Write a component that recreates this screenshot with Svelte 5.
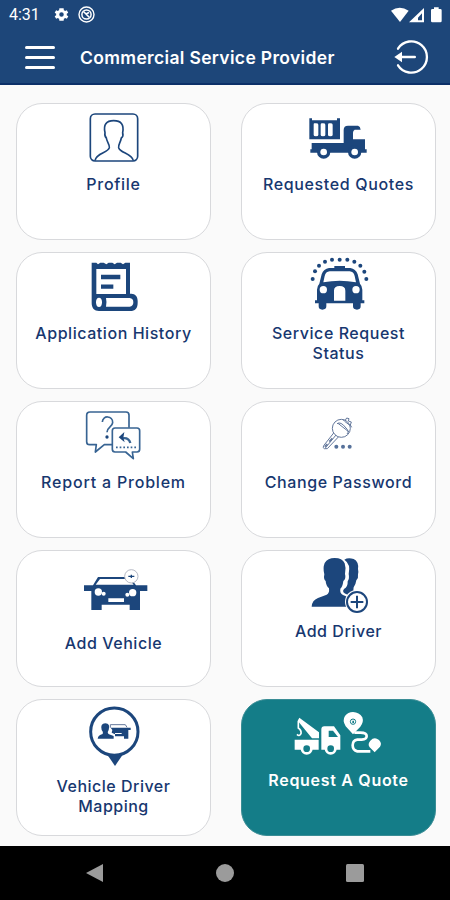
<script lang="ts">
    type Tile = {
        icon: string;
        lines: string[];
        top: number;
        height: number;
        spacing: number;
        accent?: boolean;
    };

    // top is where each drawing starts in its own units (3 per pixel)
    const tiles: Tile[] = [
        { icon: "profile", lines: ["Profile"], top: 24, height: 72, spacing: 0.7 },
        { icon: "truck", lines: ["Requested Quotes"], top: 24, height: 72, spacing: 0.65 },
        { icon: "history", lines: ["Application History"], top: 6, height: 72, spacing: 0.55 },
        { icon: "taxi", lines: ["Service Request", "Status"], top: 6, height: 72, spacing: 0.55 },
        { icon: "report", lines: ["Report a Problem"], top: 5, height: 72, spacing: 0.8 },
        { icon: "key", lines: ["Change Password"], top: 5, height: 72, spacing: 0.6 },
        { icon: "vehicle", lines: ["Add Vehicle"], top: 15, height: 84, spacing: 0.55 },
        { icon: "driver", lines: ["Add Driver"], top: 15, height: 72, spacing: 0.55 },
        { icon: "mapping", lines: ["Vehicle Driver", "Mapping"], top: 12, height: 78, spacing: 0.5 },
        { icon: "quote", lines: ["Request A Quote"], top: 12, height: 72, spacing: 0.7, accent: true },
    ];
</script>

<div class="screen">
    <div class="status">
        <span class="time">4:31</span>
        <svg class="gear" viewBox="0 0 24 24" width="17" height="17">
            <path
                fill="#fff"
                fill-rule="evenodd"
                d="M19.4 13a7 7 0 0 0 0-2l2.1-1.6-2-3.5-2.5 1a8 8 0 0 0-1.7-1L15 3.2h-6l-.4 2.7a8 8 0 0 0-1.7 1l-2.5-1-2 3.5L4.5 11a7 7 0 0 0 0 2l-2.1 1.6 2 3.5 2.5-1a8 8 0 0 0 1.7 1l.4 2.7h6l.4-2.7a8 8 0 0 0 1.7-1l2.5 1 2-3.5zM12 15.2a3.2 3.2 0 1 1 0-6.4 3.2 3.2 0 0 1 0 6.4z"
            />
        </svg>
        <svg class="badge" viewBox="0 0 17 17" width="17" height="17" fill="none" stroke="#fff">
            <circle cx="8.5" cy="8.5" r="7.5" stroke-width="1.4" />
            <circle cx="8.5" cy="8.5" r="4.6" stroke-width="1.5" />
            <path d="M5.5 5.5l6 6M8 8l3-1.5" stroke-width="1.6" />
        </svg>
        <svg class="signals" viewBox="0 0 156 48" width="52" height="16" fill="#fff">
            <path d="M0 11Q26-7 53 11L27 45z" />
            <path d="M99 3V46H54zM93 19L81 32V40H93z" fill-rule="evenodd" />
            <path d="M124 6h5V1h14v5h5q4 0 4 4v32q0 4-4 4h-24q-4 0-4-4V10q0-4 4-4z" />
        </svg>
    </div>

    <header>
        <button class="menu" aria-label="Menu">
            <span></span>
            <span></span>
            <span></span>
        </button>
        <h1>Commercial Service Provider</h1>
        <svg class="logout" viewBox="0 0 108 108" width="36" height="36">
            <path
                d="M15 29A47 47 0 1 1 15 79"
                fill="none"
                stroke="#fff"
                stroke-width="7"
                stroke-linecap="round"
            />
            <path d="M17 54H65" stroke="#fff" stroke-width="8" stroke-linecap="round" />
            <path d="M4 54L27 38V70z" fill="#fff" />
        </svg>
    </header>

    <main>
        {#each tiles as tile}
            <div class="tile" class:accent={tile.accent}>
                <svg
                    class="icon"
                    viewBox="175 {tile.top} 270 {tile.height * 3}"
                    width="90"
                    height={tile.height}
                >
                    {#if tile.icon === "profile"}
                        <g class="line" stroke-width="5">
                            <rect x="239" y="57" width="142" height="141" rx="14" />
                            <path
                                d="M253 197C257 172 292 175 296 158C297 146 289 143 287 129Q281 124 283 113Q275 77 309 77Q343 77 336 113Q339 124 332 129C329 144 323 147 324 158C329 175 364 174 368 197"
                            />
                        </g>
                    {:else if tile.icon === "truck"}
                        <path
                            fill-rule="evenodd"
                            d="M221 70h8v6h75v-6h9v63h-92zM236 85q-2 0-2 4v31q0 4 7 4t7-4V89q0-4-7-4zM259 85q-4 0-4 4v31q0 4 7 4t7-4V89q0-4-7-4zM281 85q-4 0-4 4v31q0 4 7 4t7-4V89q0-4-7-4z"
                        />
                        <path
                            d="M228 144H324V105Q324 92 337 92H367Q374 94 375 104H357Q352 107 352 113V133H388V163H393V173H224V163H228z"
                        />
                        <circle cx="264" cy="171" r="20" />
                        <circle cx="357" cy="171" r="20" />
                        <circle class="hole" cx="264" cy="171" r="10" />
                        <circle class="hole" cx="357" cy="171" r="10" />
                    {:else if tile.icon === "history"}
                        <path
                            d="M243 38h14l5 5 7-5h10l8 5 7-5h11l7 5 7-5h11l7 5 7-5h14v93h4c12 0 19 9 19 22v5c0 17-8 25-22 25H265c-14 0-22-9-22-24z"
                        />
                        <path
                            class="hole"
                            d="M257 57H346V132H257zM286 144H357Q368 145 368 157T357 170H286Q289 157 286 144z"
                        />
                        <ellipse class="hole" cx="265" cy="157" rx="9" ry="14" />
                        <path class="line" stroke-width="13" d="M271 81H329M271 110H308" />
                    {:else if tile.icon === "taxi"}
                        <g>
                            <circle cx="231" cy="87" r="6" />
                            <circle cx="238" cy="64" r="6" />
                            <circle cx="250" cy="47" r="6" />
                            <circle cx="268" cy="35" r="6" />
                            <circle cx="289" cy="29" r="6" />
                            <circle cx="312" cy="29" r="6" />
                            <circle cx="335" cy="29" r="6" />
                            <circle cx="356" cy="35" r="6" />
                            <circle cx="374" cy="47" r="6" />
                            <circle cx="386" cy="65" r="6" />
                            <circle cx="392" cy="87" r="6" />
                        </g>
                        <path
                            d="M296 48H328V54H344Q360 56 366 73L373 101Q380 108 380 119V151H386V160H375V169Q375 179 364 179Q352 179 352 169V160H272V169Q272 179 260 179Q249 179 249 169V160H238V151H244V119Q244 108 251 101L258 73Q264 56 280 54H296z"
                        />
                        <path
                            class="hole"
                            d="M282 64Q270 65 267 78L263 97Q312 87 361 97L357 78Q354 65 342 64zM295 152V122Q295 108 312 108T329 122V152z"
                        />
                        <circle class="hole" cx="263" cy="119" r="11" />
                        <circle class="hole" cx="361" cy="119" r="11" />
                    {:else if tile.icon === "report"}
                        <g class="line soft" stroke-width="5">
                            <path
                                d="M304 136H281L254 158L257 136H237Q228 136 228 127V48Q228 38 238 38H346Q355 38 355 47V85"
                            />
                            <path
                                d="M313 86H379Q387 86 387 94V150Q387 158 379 158H365L368 178L345 158H313Q305 158 305 150V94Q305 86 313 86z"
                            />
                            <path d="M275 68C276 46 307 49 306 70C305 83 289 83 289 99" />
                            <path d="M334 117Q354 113 359 131" stroke-width="7" />
                            <path stroke-dasharray="5 6" d="M316 144H378" />
                        </g>
                        <circle cx="289" cy="113" r="5" />
                        <path d="M324 114L341 98L338 115L342 129z" />
                    {:else if tile.icon === "key"}
                        <g class="line pale" stroke-width="3">
                            <circle cx="317" cy="87" r="27" />
                            <path
                                d="M294 101L264 139Q260 146 266 148H275L308 113M301 107L269 146M304 73Q315 65 331 86Q342 96 334 104M307 72L340 98M320 59L327 66L345 80M328 64L333 56L340 58L338 65L347 68L344 77L348 84"
                            />
                            <path stroke-width="5" d="M267 142L275 134M281 127L290 117" />
                        </g>
                        <g class="muted">
                            <circle cx="302" cy="142" r="6" />
                            <circle cx="322" cy="142" r="6" />
                            <circle cx="342" cy="142" r="6" />
                        </g>
                    {:else if tile.icon === "vehicle"}
                        <path
                            fill-rule="evenodd"
                            d="M262 96H357L376 121H410V138H388V195H357V179H273V195H242V138H220V121H247zM268 102L255 119H369L354 102zM293 160V171H340V160z"
                        />
                        <g class="hole">
                            <circle cx="263" cy="141" r="11" />
                            <circle cx="279" cy="146" r="6" />
                            <circle cx="366" cy="143" r="11" />
                            <circle cx="350" cy="149" r="6" />
                        </g>
                        <circle class="hole ring" cx="362" cy="94" r="20" />
                        <path class="line" stroke-width="4" d="M353 94H371M362 89V99" />
                    {:else if tile.icon === "driver"}
                        <path
                            d="M326 44Q337 37 354 42Q370 50 367 72Q369 80 367 88Q369 99 362 106Q360 120 354 127Q351 140 359 145L336 149Q316 143 325 132Q337 126 336 109Q342 101 339 87Q346 57 326 44z"
                        />
                        <path
                            class="cutout"
                            d="M228 185Q229 166 247 159L273 149Q282 145 280 130Q271 123 270 108Q263 103 266 88Q261 69 267 54Q276 39 297 39Q320 39 327 55Q332 69 328 87Q332 101 323 108Q321 125 314 131Q312 145 322 150L338 157L337 185z"
                        />
                        <circle class="hole" cx="364" cy="170" r="36" />
                        <circle class="line" stroke-width="6" cx="364" cy="171" r="30" />
                        <path class="line" stroke-width="6" d="M345 171H383M364 152V190" />
                    {:else if tile.icon === "mapping"}
                        <path d="M288 176L313 213L338 176z" />
                        <circle class="hole" cx="311" cy="110" r="72" />
                        <circle class="line" stroke-width="9" cx="311" cy="110" r="71" />
                        <path
                            d="M261 131Q262 120 276 117Q279 111 273 105Q268 85 284 85Q300 86 294 105Q288 114 295 118L309 123V131z"
                        />
                        <path class="line pale" stroke-width="3" d="M299 98V89H344L349 97" />
                        <path d="M300 98H360V105H353V131H340V124H313V118L303 113L305 105z" />
                        <path class="hole" d="M313 114H333V117H313z" />
                    {:else}
                        <g class="light">
                            <path
                                d="M191 68L250 112V130H229L186 77zM177 134H249V164H177zM257 164V103Q257 94 266 94H295L314 121V164z"
                            />
                            <path
                                d="M352 118L330 94Q319 76 328 63Q337 51 352 51Q371 52 380 67Q385 82 374 95zM417 172L402 157Q395 147 404 137Q416 124 430 135Q440 145 433 155z"
                            />
                            <path
                                class="route"
                                d="M356 113H374Q393 113 393 123T378 134H365Q351 136 351 151T365 169H404"
                            />
                            <path class="hook" d="M188 78V99Q198 106 196 116Q191 126 184 118" />
                            <circle cx="213" cy="161" r="18" />
                            <circle cx="285" cy="161" r="18" />
                        </g>
                        <g class="cut">
                            <path d="M279 107H292L307 126H279z" />
                            <circle cx="213" cy="161" r="10" />
                            <circle cx="285" cy="161" r="10" />
                            <circle class="target" cx="352" cy="80" r="8" />
                            <path d="M350 77h5v7h-5z" />
                        </g>
                    {/if}
                </svg>
                <div class="label" style="letter-spacing: {tile.spacing}px">
                    {#each tile.lines as line}
                        <span>{line}</span>
                    {/each}
                </div>
            </div>
        {/each}
    </main>

    <nav>
        <svg viewBox="0 0 18 20" width="18" height="20"><path d="M17 1V19L0 10z" /></svg>
        <svg viewBox="0 0 18 18" width="18" height="18"><circle cx="9" cy="9" r="9" /></svg>
        <svg viewBox="0 0 18 18" width="18" height="18">
            <rect width="18" height="18" rx="1.5" />
        </svg>
    </nav>
</div>

<style>
    :global(body) {
        margin: 0;
    }
    .screen {
        display: flex;
        flex-direction: column;
        width: 450px;
        height: 900px;
        overflow: hidden;
        background: #fafafa;
        font-family: Inter, "Open Sans", sans-serif;
    }
    .status {
        display: flex;
        align-items: center;
        box-sizing: border-box;
        height: 29px;
        padding: 0 7px 0 9px;
        background: #1d4679;
        color: #fff;
    }
    .time {
        width: 44px;
        font: 400 16px/29px Roboto, sans-serif;
    }
    .badge {
        margin-left: 8px;
    }
    .signals {
        margin-left: auto;
    }
    header {
        display: flex;
        align-items: center;
        box-sizing: border-box;
        height: 56px;
        padding: 2px 21px 0 25px;
        background: #1d4679;
        border-bottom: 2px solid #0c3068;
        color: #fff;
    }
    .menu {
        display: flex;
        flex-direction: column;
        gap: 7px;
        width: 30px;
        padding: 0;
        border: 0;
        background: none;
    }
    .menu span {
        height: 3px;
        border-radius: 2px;
        background: #fff;
    }
    h1 {
        flex: 1;
        margin: 1px 0 0 25px;
        font-size: 17.5px;
        font-weight: 600;
        line-height: 24px;
        letter-spacing: 0.33px;
        white-space: nowrap;
    }
    main {
        display: grid;
        grid-template-columns: 195px 195px;
        grid-auto-rows: 137px;
        gap: 12px 30px;
        flex: 1;
        padding: 18px 0 0 16px;
    }
    .tile {
        display: flex;
        flex-direction: column;
        align-items: center;
        box-sizing: border-box;
        border: 1px solid #d8d9dc;
        border-radius: 26px;
        background: #fff;
        color: #17376f;
    }
    .tile.accent {
        border-color: #3a8d95;
        background: #147d88;
        color: #fff;
    }
    .icon {
        flex: none;
        margin-top: -1px;
        fill: #1c467c;
    }
    .line {
        fill: none;
        stroke: #1c467c;
    }
    .soft {
        stroke: #386493;
        stroke-linejoin: round;
    }
    .pale {
        stroke: #64789c;
    }
    .muted {
        fill: #56719a;
    }
    .hole {
        fill: #fff;
    }
    .cutout {
        stroke: #fff;
        stroke-width: 5;
        paint-order: stroke;
    }
    .ring {
        stroke: #b5b9c5;
        stroke-width: 3;
    }
    .light {
        fill: #fff;
    }
    .route,
    .hook {
        fill: none;
        stroke: #fff;
        stroke-width: 8;
    }
    .hook {
        stroke-width: 5;
    }
    .cut {
        fill: #147d88;
    }
    .target {
        fill: none;
        stroke: #147d88;
        stroke-width: 3;
    }
    .label {
        display: flex;
        flex-direction: column;
        align-items: center;
        font-size: 16px;
        font-weight: 500;
        line-height: 19.5px;
        white-space: nowrap;
    }
    .accent .label {
        font-weight: 600;
    }
    nav {
        display: flex;
        align-items: center;
        justify-content: space-between;
        box-sizing: border-box;
        height: 54px;
        padding: 0 86px;
        background: #000;
        fill: #9b9b9b;
    }
</style>
